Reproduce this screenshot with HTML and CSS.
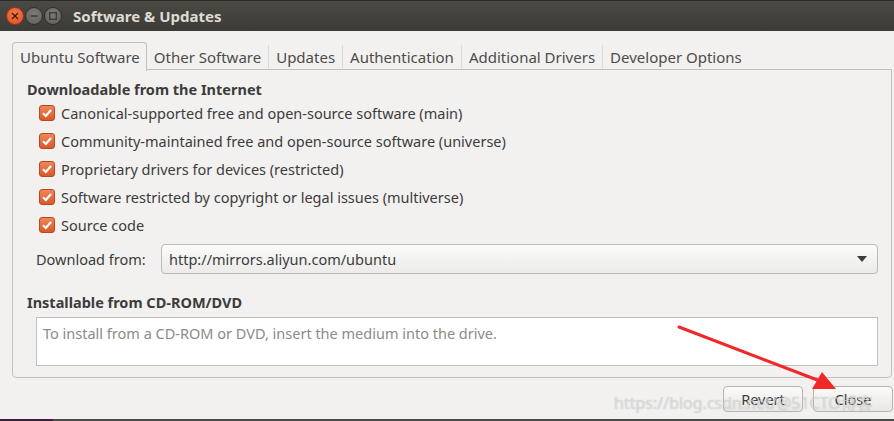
FILE: index.html
```html
<!DOCTYPE html>
<html lang="en">
<head>
  <meta charset="UTF-8">
  <title>Software &amp; Updates</title>
  <link rel="stylesheet" href="styles.css">
</head>
<body>
  <div class="window">
    <div class="titlebar">
      <div class="wm-buttons">
        <span class="wm-btn wm-close">
          <svg width="8" height="8" viewBox="0 0 8 8"><path d="M1 1L7 7M7 1L1 7" stroke="#3c1a0c" stroke-width="1.4"/></svg>
        </span>
        <span class="wm-btn wm-min">
          <svg width="8" height="8" viewBox="0 0 8 8"><path d="M0.5 4H7.5" stroke="#3a3935" stroke-width="1.4"/></svg>
        </span>
        <span class="wm-btn wm-max">
          <svg width="8" height="8" viewBox="0 0 8 8"><rect x="0.7" y="0.7" width="6.6" height="6.6" fill="none" stroke="#3a3935" stroke-width="1.3"/></svg>
        </span>
      </div>
      <span class="title">Software &amp; Updates</span>
    </div>

    <div class="content">
      <div class="tabs">
        <span class="tab active">Ubuntu Software</span>
        <span class="tab">Other Software</span>
        <span class="tab">Updates</span>
        <span class="tab">Authentication</span>
        <span class="tab">Additional Drivers</span>
        <span class="tab">Developer Options</span>
      </div>

      <div class="panel">
        <h2 class="section-title">Downloadable from the Internet</h2>
        <div class="checks">
          <label class="check"><span class="box"></span>Canonical-supported free and open-source software (main)</label>
          <label class="check"><span class="box"></span>Community-maintained free and open-source software (universe)</label>
          <label class="check"><span class="box"></span>Proprietary drivers for devices (restricted)</label>
          <label class="check"><span class="box"></span>Software restricted by copyright or legal issues (multiverse)</label>
          <label class="check"><span class="box"></span>Source code</label>
        </div>

        <div class="download-row">
          <span class="download-label">Download from:</span>
          <div class="combo">
            <span>http://mirrors.aliyun.com/ubuntu</span>
            <svg class="combo-arrow" width="10" height="6" viewBox="0 0 10 6"><path d="M0 0H10L5 6Z" fill="#3c3c3c"/></svg>
          </div>
        </div>

        <h2 class="section-title cd-title">Installable from CD-ROM/DVD</h2>
        <div class="cd-box">To install from a CD-ROM or DVD, insert the medium into the drive.</div>
      </div>

      <div class="actions">
        <button class="btn">Revert</button>
        <button class="btn">Close</button>
      </div>
    </div>

    <div class="bottom-edge"></div>

    <!-- annotation arrow and watermark drawn over the screenshot -->
    <svg class="arrow" width="894" height="421" viewBox="0 0 894 421">
      <path d="M679 327L820 381" stroke="#f0282a" stroke-width="3" stroke-linecap="round"/>
      <path d="M836 389L812 389L822 372Z" fill="#f0282a"/>
    </svg>
    <div class="watermark">https://blog.csdn.net/@51CTO博客</div>
  </div>
</body>
</html>
```

FILE: styles.css
```css
body {
  margin: 0;
  width: 894px;
  height: 421px;
  overflow: hidden;
  font-family: 'Noto Sans', 'Noto Sans CJK SC', sans-serif;
  background: #f2f1f0;
}

.window {
  position: relative;
  width: 894px;
  height: 421px;
  display: flex;
  flex-direction: column;
  background: #f2f1f0;
  color: #3c3c3c;
}

.titlebar {
  height: 31px;
  flex: none;
  display: flex;
  align-items: center;
  background: linear-gradient(#4a4944, #3c3b37);
  border-top: 1px solid #2b2a27;
  box-sizing: border-box;
}

.wm-buttons {
  display: flex;
  gap: 1px;
  padding-left: 6px;
}

.wm-btn {
  width: 18px;
  height: 18px;
  border-radius: 50%;
  display: flex;
  align-items: center;
  justify-content: center;
  box-sizing: border-box;
}

.wm-close {
  background: radial-gradient(circle at 50% 35%, #f6784a, #e0501e);
  border: 1px solid #9c3412;
}

.wm-min,
.wm-max {
  background: radial-gradient(circle at 50% 35%, #7c7b76, #5f5e5a);
  border: 1px solid #2f2e2b;
}

.title {
  margin-left: 11px;
  font-size: 15px;
  font-weight: bold;
  color: #dfdbd2;
}

.content {
  flex: 1;
  display: flex;
  flex-direction: column;
  padding: 11px 2px 0 12px;
}

.tabs {
  display: flex;
  height: 27px;
  font-size: 15px;
  color: #4c4c4c;
}

.tab {
  display: flex;
  align-items: center;
  padding: 0 7px 0 7px;
  border-left: 1px solid #dcdad5;
  margin-top: 3px;
  height: 23px;
}

.tab.active {
  margin-top: 0;
  height: 28px;
  padding: 0 6px 0 7px;
  border: 1px solid #c3c0bb;
  border-bottom: none;
  border-radius: 4px 4px 0 0;
  background: #f2f1f0;
  position: relative;
  z-index: 1;
}

.tab.active + .tab {
  border-left: none;
}

.panel {
  height: 309px;
  box-sizing: border-box;
  border: 1px solid #c3c0bb;
  border-radius: 0 0 4px 4px;
  padding: 10px 13px 0 14px;
}

.section-title {
  margin: 0;
  font-size: 14.5px;
  font-weight: bold;
  color: #3c3c3c;
  line-height: 18px;
}

.checks {
  display: flex;
  flex-direction: column;
  margin-top: 1px;
  padding-left: 12px;
}

.check {
  display: flex;
  align-items: center;
  height: 28px;
  font-size: 14.5px;
  color: #3c3c3c;
}

.box {
  width: 16px;
  height: 16px;
  margin-right: 6px;
  box-sizing: border-box;
  border-radius: 3px;
  border: 1px solid #b8481f;
  background-image: url("data:image/svg+xml,%3Csvg xmlns='http://www.w3.org/2000/svg' width='14' height='14' viewBox='0 0 14 14'%3E%3Cpath d='M3 7.3L5.8 10L11 4' fill='none' stroke='white' stroke-width='2.2'/%3E%3C/svg%3E"), linear-gradient(#f0875a, #d9582a);
}

.download-row {
  display: flex;
  align-items: center;
  margin-top: 5px;
  padding-left: 9px;
}

.download-label {
  width: 125px;
  font-size: 14.5px;
}

.combo {
  flex: 1;
  height: 30px;
  box-sizing: border-box;
  display: flex;
  align-items: center;
  justify-content: space-between;
  padding: 0 10px 0 7px;
  border: 1px solid #bdbab5;
  border-radius: 4px;
  background: linear-gradient(#fbfbfa, #ecebe9);
  font-size: 14.5px;
}

.cd-title {
  margin-top: 19px;
}

.cd-box {
  margin: 6px 0 0 9px;
  height: 49px;
  box-sizing: border-box;
  padding: 5px 6px;
  border: 1px solid #c3c0bb;
  background: #ffffff;
  font-size: 14.5px;
  color: #8b8b88;
}

.actions {
  display: flex;
  justify-content: flex-end;
  gap: 10px;
  margin: 8px -1px 0 0;
}

.btn {
  width: 80px;
  height: 26px;
  font-family: inherit;
  font-size: 14.5px;
  color: #3c3c3c;
  border: 1px solid #b7b4af;
  border-radius: 4px;
  background: linear-gradient(#fbfbfa, #e8e7e4);
  padding: 0;
}

.bottom-edge {
  position: absolute;
  left: 0;
  right: 0;
  bottom: 0;
  height: 2px;
  background: linear-gradient(90deg, #3e1f38 0, #3e1f38 53px, #4a4a48 53px);
}

.arrow {
  position: absolute;
  left: 0;
  top: 0;
  pointer-events: none;
}

.watermark {
  position: absolute;
  left: 614px;
  top: 390px;
  font-size: 16px;
  color: rgba(255, 255, 255, 0.5);
  text-shadow: 0 0 1px rgba(120, 120, 120, 0.55);
  pointer-events: none;
  white-space: nowrap;
}
```
